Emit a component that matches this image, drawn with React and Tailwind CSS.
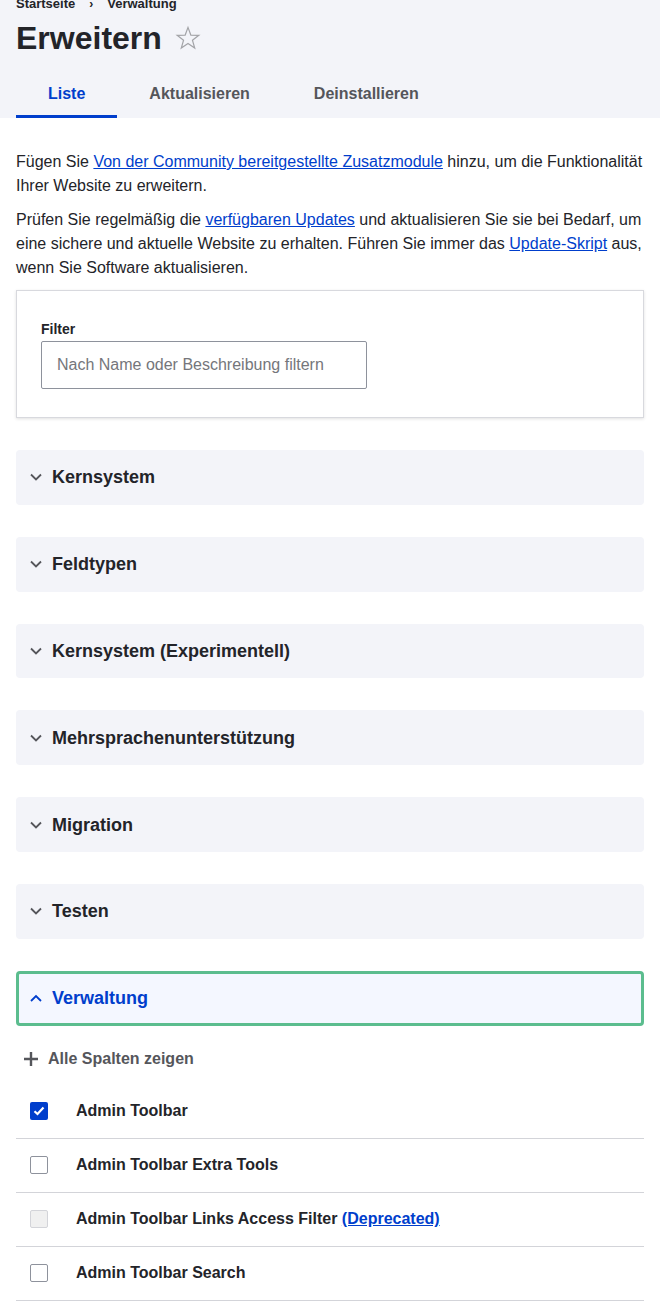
import { useState } from "react";

const GROUPS = [
  "Kernsystem",
  "Feldtypen",
  "Kernsystem (Experimentell)",
  "Mehrsprachenunterstützung",
  "Migration",
  "Testen",
];

const MODULES = [
  { name: "Admin Toolbar", checked: true },
  { name: "Admin Toolbar Extra Tools" },
  { name: "Admin Toolbar Links Access Filter", disabled: true, deprecated: true },
  { name: "Admin Toolbar Search" },
];

function Chevron({ up, className }) {
  return (
    <svg viewBox="0 0 12 8" className={className} fill="none" stroke="currentColor" strokeWidth="1.8">
      {up ? <path d="M1 7 6 2l5 5" /> : <path d="M1 1.5 6 6.5l5-5" />}
    </svg>
  );
}

function Checkbox({ checked, disabled }) {
  if (checked) {
    return (
      <span className="flex h-[18px] w-[18px] items-center justify-center rounded-[2px] bg-[#003ecc]">
        <svg viewBox="0 0 12 10" className="h-[10px] w-[12px]" fill="none" stroke="white" strokeWidth="2.2">
          <path d="M1.5 5.2 4.5 8l6-6.5" />
        </svg>
      </span>
    );
  }
  return (
    <span
      className={`block h-[18px] w-[18px] rounded-[2px] border ${
        disabled ? "border-[#d3d4d9] bg-[#f0f0f0]" : "border-[#8e929c] bg-white"
      }`}
    />
  );
}

export default function App() {
  const [filter, setFilter] = useState("");
  const [tab] = useState("Liste");

  return (
    <div className="min-h-[1301px] bg-white font-['Liberation_Sans',Arial,sans-serif] text-[#232429]">
      {/* page header */}
      <div className="bg-[#f3f4f9] px-4">
        <div className="-mt-[4px] flex items-center text-[13px] font-bold leading-4">
          <span>Startseite</span>
          <span className="mx-[14px] text-[12px]">›</span>
          <span>Verwaltung</span>
        </div>
        <div className="mt-[6px] flex items-center">
          <h1 className="text-[32px] font-bold leading-10">Erweitern</h1>
          <svg viewBox="0 0 24 24" className="ml-[13px] h-[26px] w-[26px] text-[#a3a4a8]" fill="none" stroke="currentColor" strokeWidth="1.1">
            <path d="M12 2.2 14.6 9.3 22 9.5 16.1 14 18.2 21.2 12 17 5.8 21.2 7.9 14 2 9.5 9.4 9.3Z" />
          </svg>
        </div>
        <nav className="mt-[12px] flex">
          {["Liste", "Aktualisieren", "Deinstallieren"].map((t) => (
            <a
              key={t}
              className={`flex h-12 items-center border-b-[3px] px-8 pt-[3px] text-base font-bold ${
                tab === t ? "border-[#003ecc] text-[#003ecc]" : "border-transparent text-[#55565b]"
              }`}
            >
              {t}
            </a>
          ))}
        </nav>
      </div>

      <div className="px-4 pt-[32px]">
        <p className="text-base leading-6">
          Fügen Sie{" "}
          <a className="text-[#003ecc] underline">Von der Community bereitgestellte Zusatzmodule</a>{" "}
          hinzu, um die Funktionalität Ihrer Website zu erweitern.
        </p>
        <p className="mt-[10px] text-base leading-6">
          Prüfen Sie regelmäßig die <a className="text-[#003ecc] underline">verfügbaren Updates</a> und
          aktualisieren Sie sie bei Bedarf, um eine sichere und aktuelle Website zu erhalten. Führen Sie
          immer das <a className="text-[#003ecc] underline">Update-Skript</a> aus, wenn Sie Software
          aktualisieren.
        </p>

        <div className="mt-[10px] border border-[#d8d9de] px-6 pb-[28px] pt-[29px] shadow-[0_1px_3px_rgba(0,0,0,0.12)]">
          <label className="block text-sm font-bold leading-[18px]">Filter</label>
          <input
            value={filter}
            onChange={(e) => setFilter(e.target.value)}
            placeholder="Nach Name oder Beschreibung filtern"
            className="mt-[3px] h-12 w-[326px] rounded-[2px] border border-[#8e929c] px-[15px] text-base placeholder:text-[#75767b] focus:outline-none"
          />
        </div>

        <div className="mt-8 flex flex-col gap-8">
          {GROUPS.map((g) => (
            <div key={g} className="flex h-[54.8px] items-center rounded-[4px] bg-[#f3f4f9] pl-[14px]">
              <Chevron className="h-2 w-3 text-[#55565b]" />
              <span className="ml-[10px] text-lg font-bold">{g}</span>
            </div>
          ))}
          <div className="flex h-[54.8px] items-center rounded-[4px] border-[3px] border-[#5bbd8e] bg-[#f4f7ff] pl-[11px]">
            <Chevron up className="h-2 w-3 text-[#003ecc]" />
            <span className="ml-[10px] text-lg font-bold text-[#003ecc]">Verwaltung</span>
          </div>
        </div>

        <div className="mt-[21px] flex items-center pl-2 text-base font-bold text-[#55565b]">
          <svg viewBox="0 0 14 14" className="h-[14px] w-[14px]" stroke="currentColor" strokeWidth="2.4">
            <path d="M7 0v14M0 7h14" />
          </svg>
          <span className="ml-[10px]">Alle Spalten zeigen</span>
        </div>

        <div className="mt-[14px]">
          {MODULES.map((m) => (
            <div key={m.name} className="flex h-[54px] items-center border-b border-[#d3d4d9] pl-[14px]">
              <Checkbox checked={m.checked} disabled={m.disabled} />
              <span className="ml-7 text-base font-bold">
                {m.name}
                {m.deprecated && (
                  <>
                    {" "}
                    <a className="text-[#003ecc] underline">(Deprecated)</a>
                  </>
                )}
              </span>
            </div>
          ))}
        </div>
      </div>
    </div>
  );
}
